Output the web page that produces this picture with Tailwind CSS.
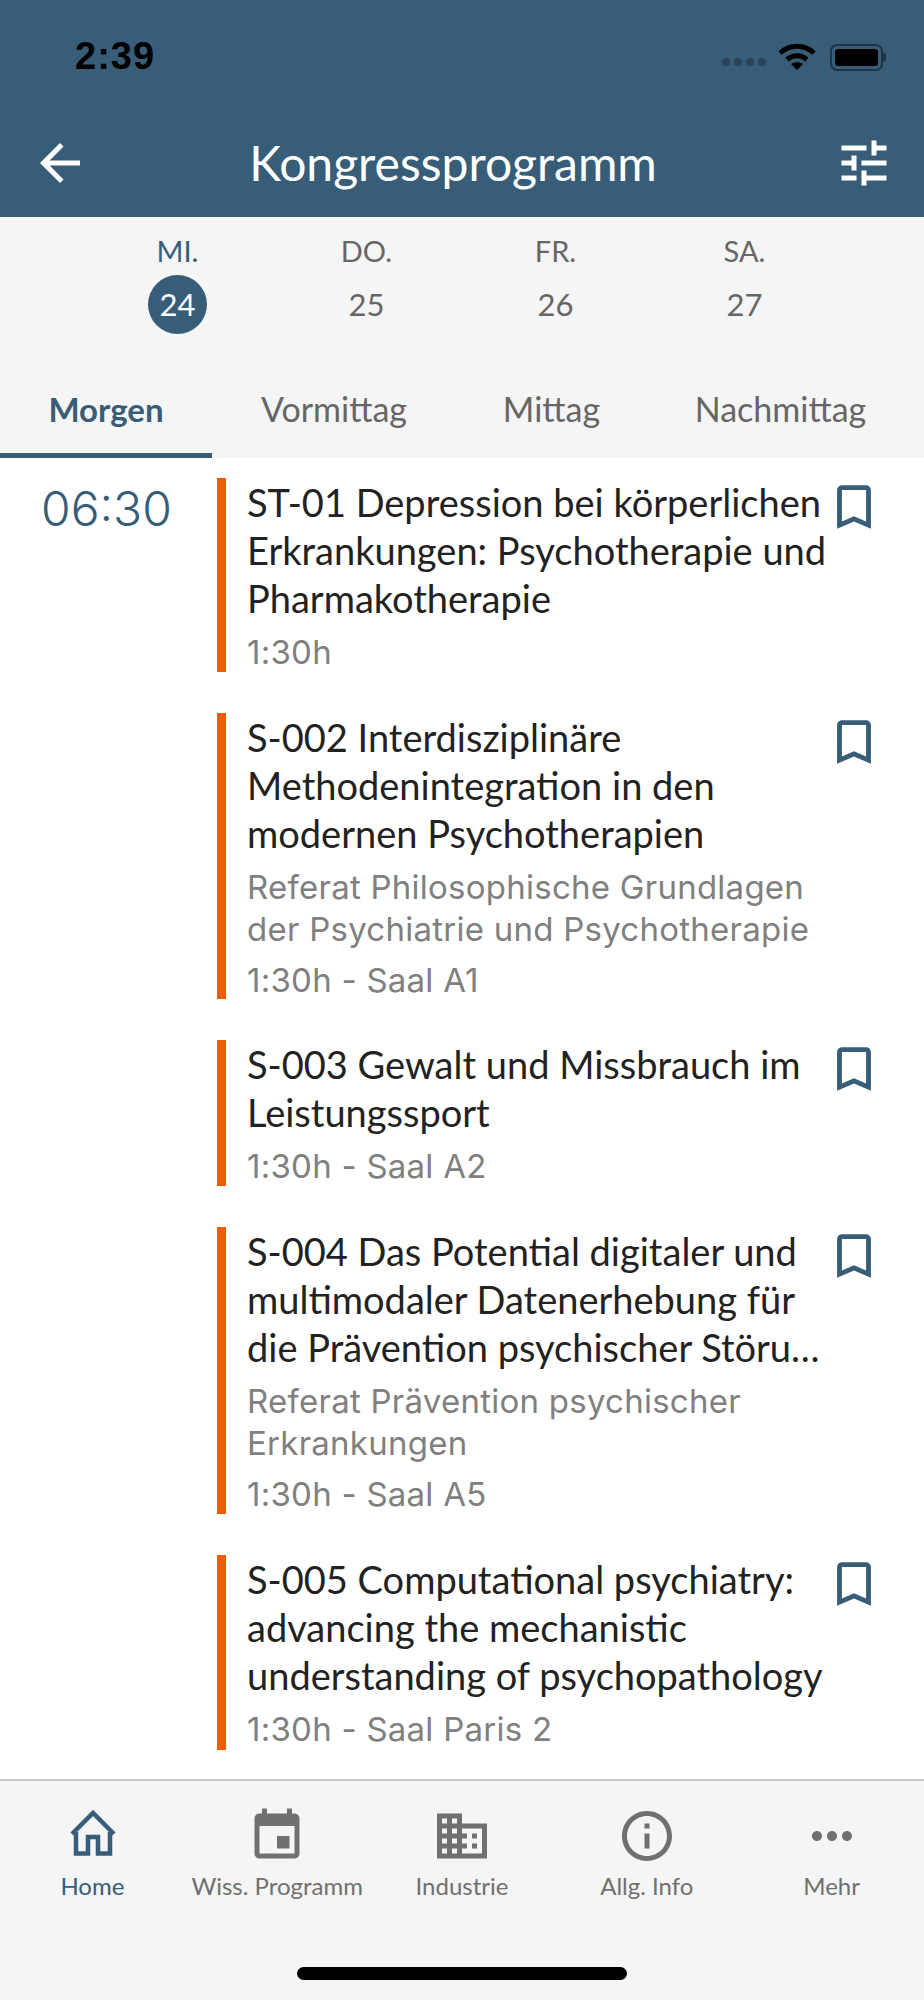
<!DOCTYPE html>
<html lang="de">
<head>
    <meta charset="UTF-8">
    <meta name="viewport" content="width=device-width, initial-scale=1.0">
    <title>Kongressprogramm</title>
    <script src="https://cdn.jsdelivr.net/npm/@tailwindcss/browser@4"></script>
</head>
<body class="bg-white font-['Lato',sans-serif]">
    <div class="w-[924px] h-[2000px] flex flex-col overflow-hidden">
        <!-- status + nav bar -->
        <header class="h-[217px] shrink-0 bg-[#375d78] text-white">
            <div class="h-[114px] pl-[75px] pr-[38px] flex items-center justify-between">
                <span class="font-['Liberation_Sans',sans-serif] text-[38px] text-black font-bold tracking-[1px] leading-none -mt-[2px]">2:39</span>
                <div class="flex items-center">
                    <div class="flex gap-[4px] mt-[10px] mr-[11px]">
                        <span class="w-[8px] h-[8px] rounded-full bg-[#2a4559]"></span>
                        <span class="w-[8px] h-[8px] rounded-full bg-[#2a4559]"></span>
                        <span class="w-[8px] h-[8px] rounded-full bg-[#2a4559]"></span>
                        <span class="w-[8px] h-[8px] rounded-full bg-[#2a4559]"></span>
                    </div>
                    <svg class="w-[40px] h-[30px] mr-[13px]" viewBox="0 0 40 30" fill="none" stroke="#000" stroke-width="5">
                        <path d="M3 11c10-9 24-9 34 0"/>
                        <path d="M10 17.500c6-5 14-5 20 0"/>
                        <path d="M20 28l-6-6c3.500-2.500 8.500-2.500 12 0z" fill="#000" stroke="none"/>
                    </svg>
                    <div class="w-[53px] h-[27px] rounded-[7px] border-2 border-[#1f3444] p-[3px]">
                        <div class="w-full h-full rounded-[3px] bg-black"></div>
                    </div>
                    <div class="w-[3px] h-[9px] rounded-r bg-[#1f3444]"></div>
                </div>
            </div>
            <div class="h-[103px] px-[30px] flex items-center justify-between">
                <svg class="w-[60px] h-[60px] -mt-[5px]" viewBox="0 0 24 24" fill="#fff"><path d="M20 11H7.830l5.590-5.590L12 4l-8 8 8 8 1.410-1.410L7.830 13H20v-2z"/></svg>
                <h1 class="text-[48px] leading-none -mt-[6px] mr-[18px]">Kongressprogramm</h1>
                <svg class="w-[60px] h-[60px] -mt-[5px]" viewBox="0 0 24 24" fill="#fff"><path d="M3 17v2h6v-2H3zM3 5v2h10V5H3zm10 16v-2h8v-2h-8v-2h-2v6h2zM7 9v2H3v2h4v2h2V9H7zm14 4v-2H11v2h10zm-6-4h2V7h4V5h-4V3h-2v6z"/></svg>
            </div>
        </header>

        <!-- days and tabs -->
        <section class="h-[241px] shrink-0 bg-[#f5f5f5]">
            <div class="h-[180px] pl-[83px] pt-[13px] flex text-[#666] text-[29px] leading-none">
                <div class="w-[189px] flex flex-col items-center text-[#375d78]">
                    <span class="h-[40px] mb-[5px] flex items-center">MI.</span>
                    <span class="w-[59px] h-[59px] rounded-full bg-[#375d78] text-white text-[31px] flex items-center justify-center">24</span>
                </div>
                <div class="w-[189px] flex flex-col items-center">
                    <span class="h-[40px] mb-[5px] flex items-center">DO.</span>
                    <span class="h-[59px] text-[31px] flex items-center">25</span>
                </div>
                <div class="w-[189px] flex flex-col items-center">
                    <span class="h-[40px] mb-[5px] flex items-center">FR.</span>
                    <span class="h-[59px] text-[31px] flex items-center">26</span>
                </div>
                <div class="w-[189px] flex flex-col items-center">
                    <span class="h-[40px] mb-[5px] flex items-center">SA.</span>
                    <span class="h-[59px] text-[31px] flex items-center">27</span>
                </div>
            </div>
            <div class="h-[61px] flex text-[34px] text-[#666] leading-[24px]">
                <div class="w-[212px] text-center text-[33px] font-bold text-[#375d78] border-b-[5px] border-[#375d78]">Morgen</div>
                <div class="w-[244px] text-center">Vormittag</div>
                <div class="w-[191px] text-center">Mittag</div>
                <div class="w-[267px] text-center">Nachmittag</div>
            </div>
        </section>

        <!-- program list -->
        <main class="flex-1 flex pt-[20px]">
            <div class="w-[217px] shrink-0 pl-[41px] font-['Inter',sans-serif] font-light text-[48px] leading-[62px] text-[#375d78]">06:30</div>
            <div class="flex-1 flex flex-col gap-[41px]">
                <article class="h-[194px] flex border-l-[9px] border-[#ec5e04] pl-[21px]">
                    <div class="w-[578px] text-[38px] leading-[48px] text-[#222] whitespace-nowrap">
                        <p>ST-01 Depression bei körperlichen<br>Erkrankungen: Psychotherapie und<br>Pharmakotherapie</p>
                        <p class="font-['Inter',sans-serif] text-[33px] tracking-[0.25px] leading-[42px] text-[#808080] mt-[9px]">1:30h</p>
                    </div>
                    <svg class="w-[58px] h-[58px] fill-[#375d78]" viewBox="0 0 24 24"><path d="M17 3H7c-1.100 0-2 .9-2 2v16l7-3 7 3V5c0-1.100-.9-2-2-2zm0 15l-5-2.180L7 18V5h10v13z"/></svg>
                </article>
                <article class="h-[286px] flex border-l-[9px] border-[#ec5e04] pl-[21px]">
                    <div class="w-[578px] text-[38px] leading-[48px] text-[#222] whitespace-nowrap">
                        <p>S-002 Interdisziplinäre<br>Methodenintegration in den<br>modernen Psychotherapien</p>
                        <p class="font-['Inter',sans-serif] text-[33px] tracking-[0.25px] leading-[42px] text-[#808080] mt-[9px]">Referat Philosophische Grundlagen<br>der Psychiatrie und Psychotherapie</p>
                        <p class="font-['Inter',sans-serif] text-[33px] tracking-[0.25px] leading-[42px] text-[#808080] mt-[9px]">1:30h - Saal A1</p>
                    </div>
                    <svg class="w-[58px] h-[58px] fill-[#375d78]" viewBox="0 0 24 24"><path d="M17 3H7c-1.100 0-2 .9-2 2v16l7-3 7 3V5c0-1.100-.9-2-2-2zm0 15l-5-2.180L7 18V5h10v13z"/></svg>
                </article>
                <article class="h-[146px] flex border-l-[9px] border-[#ec5e04] pl-[21px]">
                    <div class="w-[578px] text-[38px] leading-[48px] text-[#222] whitespace-nowrap">
                        <p>S-003 Gewalt und Missbrauch im<br>Leistungssport</p>
                        <p class="font-['Inter',sans-serif] text-[33px] tracking-[0.25px] leading-[42px] text-[#808080] mt-[9px]">1:30h - Saal A2</p>
                    </div>
                    <svg class="w-[58px] h-[58px] fill-[#375d78]" viewBox="0 0 24 24"><path d="M17 3H7c-1.100 0-2 .9-2 2v16l7-3 7 3V5c0-1.100-.9-2-2-2zm0 15l-5-2.180L7 18V5h10v13z"/></svg>
                </article>
                <article class="h-[287px] flex border-l-[9px] border-[#ec5e04] pl-[21px]">
                    <div class="w-[578px] text-[38px] leading-[48px] text-[#222] whitespace-nowrap">
                        <p>S-004 Das Potential digitaler und<br>multimodaler Datenerhebung für<br>die Prävention psychischer Störu…</p>
                        <p class="font-['Inter',sans-serif] text-[33px] tracking-[0.25px] leading-[42px] text-[#808080] mt-[9px]">Referat Prävention psychischer<br>Erkrankungen</p>
                        <p class="font-['Inter',sans-serif] text-[33px] tracking-[0.25px] leading-[42px] text-[#808080] mt-[9px]">1:30h - Saal A5</p>
                    </div>
                    <svg class="w-[58px] h-[58px] fill-[#375d78]" viewBox="0 0 24 24"><path d="M17 3H7c-1.100 0-2 .9-2 2v16l7-3 7 3V5c0-1.100-.9-2-2-2zm0 15l-5-2.180L7 18V5h10v13z"/></svg>
                </article>
                <article class="h-[195px] flex border-l-[9px] border-[#ec5e04] pl-[21px]">
                    <div class="w-[578px] text-[38px] leading-[48px] text-[#222] whitespace-nowrap">
                        <p>S-005 Computational psychiatry:<br>advancing the mechanistic<br>understanding of psychopathology</p>
                        <p class="font-['Inter',sans-serif] text-[33px] tracking-[0.25px] leading-[42px] text-[#808080] mt-[9px]">1:30h - Saal Paris 2</p>
                    </div>
                    <svg class="w-[58px] h-[58px] fill-[#375d78]" viewBox="0 0 24 24"><path d="M17 3H7c-1.100 0-2 .9-2 2v16l7-3 7 3V5c0-1.100-.9-2-2-2zm0 15l-5-2.180L7 18V5h10v13z"/></svg>
                </article>
            </div>
        </main>

        <!-- tab bar -->
        <footer class="h-[221px] shrink-0 bg-[#f5f5f5] border-t-2 border-[#c8c8c8] flex flex-col">
            <nav class="grid grid-cols-5 pt-[25px] text-[24px] leading-[30px] text-[#707070] text-center">
                <div class="flex flex-col items-center text-[#375d78]">
                    <svg class="w-[60px] h-[60px]" viewBox="0 0 60 60" fill="none" stroke="currentColor" stroke-width="4.500"><path d="M10 28 31 7 52 28M14 26V47.500H26V31H36V47.500H48V26"/></svg>
                    <span class="mt-[5px]">Home</span>
                </div>
                <div class="flex flex-col items-center">
                    <svg class="w-[60px] h-[60px] fill-current" viewBox="0 0 24 24"><path d="M17 12h-5v5h5v-5zM16 1v2H8V1H6v2H5c-1.110 0-1.990.9-1.990 2L3 19c0 1.100.89 2 2 2h14c1.100 0 2-.9 2-2V5c0-1.100-.9-2-2-2h-1V1h-2zm3 18H5V8h14v11z"/></svg>
                    <span class="mt-[5px]">Wiss. Programm</span>
                </div>
                <div class="flex flex-col items-center">
                    <svg class="w-[60px] h-[60px] fill-current" viewBox="0 0 24 24"><path d="M12 7V3H2v18h20V7H12zM6 19H4v-2h2v2zm0-4H4v-2h2v2zm0-4H4V9h2v2zm0-4H4V5h2v2zm4 12H8v-2h2v2zm0-4H8v-2h2v2zm0-4H8V9h2v2zm0-4H8V5h2v2zm10 12h-8v-2h2v-2h-2v-2h2v-2h-2V9h8v10zm-2-8h-2v2h2v-2zm0 4h-2v2h2v-2z"/></svg>
                    <span class="mt-[5px]">Industrie</span>
                </div>
                <div class="flex flex-col items-center">
                    <svg class="w-[60px] h-[60px] fill-current" viewBox="0 0 24 24"><path d="M11 7h2v2h-2zm0 4h2v6h-2zm1-9C6.480 2 2 6.480 2 12s4.480 10 10 10 10-4.480 10-10S17.520 2 12 2zm0 18c-4.410 0-8-3.590-8-8s3.590-8 8-8 8 3.590 8 8-3.590 8-8 8z"/></svg>
                    <span class="mt-[5px]">Allg. Info</span>
                </div>
                <div class="flex flex-col items-center">
                    <svg class="w-[60px] h-[60px] fill-current" viewBox="0 0 24 24"><path d="M6 10c-1.100 0-2 .9-2 2s.9 2 2 2 2-.9 2-2-.9-2-2-2zm12 0c-1.100 0-2 .9-2 2s.9 2 2 2 2-.9 2-2-.9-2-2-2zm-6 0c-1.100 0-2 .9-2 2s.9 2 2 2 2-.9 2-2-.9-2-2-2z"/></svg>
                    <span class="mt-[5px]">Mehr</span>
                </div>
            </nav>
            <div class="mt-auto mb-[20px] mx-auto w-[330px] h-[13px] rounded-full bg-black"></div>
        </footer>
    </div>
</body>
</html>
